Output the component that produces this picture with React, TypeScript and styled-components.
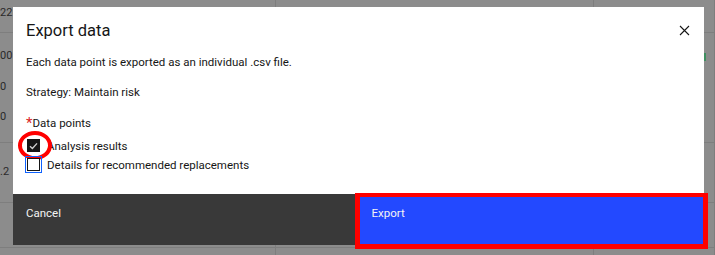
import styled, { createGlobalStyle } from 'styled-components';

const GlobalStyle = createGlobalStyle`
  html, body {
    margin: 0;
    padding: 0;
  }
  body {
    background: #8c8c8c;
    font-family: Roboto, "Noto Sans", sans-serif;
    overflow: hidden;
  }
`;

type Row = { height: number; values: { text: string; shift: number; top: number }[] };

// table rows behind the overlay; only a sliver of the first column shows
const rows: Row[] = [
  { height: 33, values: [{ text: '22', shift: 0, top: 5 }] },
  {
    height: 110,
    values: [
      { text: '00', shift: 0, top: 15 },
      { text: '0', shift: 0, top: 15 },
      { text: '0', shift: 0, top: 14 },
    ],
  },
  { height: 60, values: [{ text: '.2', shift: 0, top: 21 }] },
  { height: 45, values: [] },
  { height: 20, values: [] },
];

export default function App() {
  return (
    <Stage>
      <GlobalStyle />
      <Table>
        {rows.map((row, i) => (
          <TableRow key={i} style={{ height: row.height }}>
            <Cell>
              {row.values.map((v, j) => (
                <Value key={j} $shift={v.shift} $top={v.top}>
                  {v.text}
                </Value>
              ))}
            </Cell>
            <Cell />
            <Cell>{i === 1 && <GreenMark />}</Cell>
          </TableRow>
        ))}
      </Table>

      <Modal>
        <Header>
          <Title>Export data</Title>
          <CloseButton aria-label="Close">
            <svg width="11" height="11" viewBox="0 0 11 11">
              <path d="M1 1 L10 10 M10 1 L1 10" stroke="#161616" strokeWidth="1.1" />
            </svg>
          </CloseButton>
        </Header>
        <Body>
          <Description>Each data point is exported as an individual .csv file.</Description>
          <Strategy>Strategy: Maintain risk</Strategy>
          <FieldLabel>
            <Required>*</Required>Data points
          </FieldLabel>
          <CheckList>
            <CheckRow>
              <Box $checked>
                <svg width="9" height="8" viewBox="0 0 9 8">
                  <path d="M1 4.2 L3.4 6.4 L8 1.4" stroke="#d0d0d0" strokeWidth="1.4" fill="none" />
                </svg>
              </Box>
              <CheckLabel>Analysis results</CheckLabel>
              <Circle />
            </CheckRow>
            <CheckRow>
              <Box $focused />
              <CheckLabel>Details for recommended replacements</CheckLabel>
            </CheckRow>
          </CheckList>
        </Body>
        <Footer>
          <FooterButton $kind="secondary">Cancel</FooterButton>
          <FooterButton $kind="primary">
            Export
            <Highlight />
          </FooterButton>
        </Footer>
      </Modal>
    </Stage>
  );
}

const Stage = styled.div`
  position: relative;
  width: 715px;
  height: 255px;
  overflow: hidden;
  background: #8c8c8c;
`;

const Table = styled.div`
  display: flex;
  flex-direction: column;
`;

const TableRow = styled.div`
  display: grid;
  grid-template-columns: 276px 318px 1fr;
  border-bottom: 1px solid #7e7e7e;
  box-sizing: border-box;
`;

const Cell = styled.div`
  border-right: 1px solid #7e7e7e;
  display: flex;
  flex-direction: column;
  overflow: hidden;
  position: relative;
`;

const Value = styled.span<{ $shift: number; $top: number }>`
  display: block;
  margin-left: ${(p) => -p.$shift}px;
  margin-top: ${(p) => p.$top}px;
  font-size: 11px;
  line-height: 16px;
  color: #2a2a2a;
`;

const GreenMark = styled.span`
  position: absolute;
  left: 110px;
  top: 20px;
  width: 2px;
  height: 8px;
  background: #3f8f60;
`;

const Modal = styled.div`
  position: absolute;
  left: 13px;
  top: 7px;
  width: 691px;
  height: 238px;
  background: #ffffff;
  display: flex;
  flex-direction: column;
  color: #161616;
`;

const Header = styled.div`
  display: flex;
  justify-content: space-between;
  align-items: flex-start;
  padding: 12px 13px 0 13px;
`;

const Title = styled.h2`
  margin: 0;
  font-size: 16.5px;
  font-weight: 400;
  line-height: 24px;
`;

const CloseButton = styled.button`
  width: 11px;
  height: 11px;
  padding: 0;
  margin: 6px 1px 0 0;
  border: none;
  background: none;
  display: flex;
`;

const Body = styled.div`
  display: flex;
  flex-direction: column;
  padding: 0 13px;
  font-size: 11.5px;
  line-height: 16px;
`;

const Description = styled.p`
  margin: 11px 0 0;
`;

const Strategy = styled.p`
  margin: 14px 0 0;
`;

const FieldLabel = styled.div`
  margin-top: 15px;
`;

const Required = styled.span`
  color: #da1e28;
  font-size: 15px;
  vertical-align: -1px;
`;

const CheckList = styled.div`
  display: flex;
  flex-direction: column;
  gap: 6px;
  margin-top: 8px;
  padding-left: 1px;
`;

const CheckRow = styled.label`
  position: relative;
  display: flex;
  align-items: center;
  gap: 7px;
  height: 13px;
`;

const Box = styled.span<{ $checked?: boolean; $focused?: boolean }>`
  width: 13px;
  height: 13px;
  box-sizing: border-box;
  border: 1px solid #161616;
  background: ${(p) => (p.$checked ? '#161616' : '#ffffff')};
  display: flex;
  align-items: center;
  justify-content: center;
  outline: ${(p) => (p.$focused ? '1.5px solid #0f62fe' : 'none')};
  outline-offset: 1px;
`;

const CheckLabel = styled.span`
  font-size: 11.5px;
  line-height: 16px;
`;

const Circle = styled.span`
  position: absolute;
  left: -9px;
  top: -8px;
  width: 34px;
  height: 29px;
  box-sizing: border-box;
  border: 4px solid #ff0000;
  border-radius: 50%;
`;

const Footer = styled.div`
  margin-top: auto;
  display: grid;
  grid-template-columns: 1fr 1fr;
  height: 51px;
`;

const FooterButton = styled.div<{ $kind: 'primary' | 'secondary' }>`
  position: relative;
  box-sizing: border-box;
  padding: 11px 13px 0;
  font-size: 11.5px;
  line-height: 16px;
  color: #f4f4f4;
  background: ${(p) => (p.$kind === 'primary' ? '#2349ff' : '#393939')};
`;

const Highlight = styled.span`
  position: absolute;
  left: -3.5px;
  right: -3.5px;
  top: -1.5px;
  bottom: -3.5px;
  border: 5px solid #ff0000;
  border-top-width: 4px;
  pointer-events: none;
`;
